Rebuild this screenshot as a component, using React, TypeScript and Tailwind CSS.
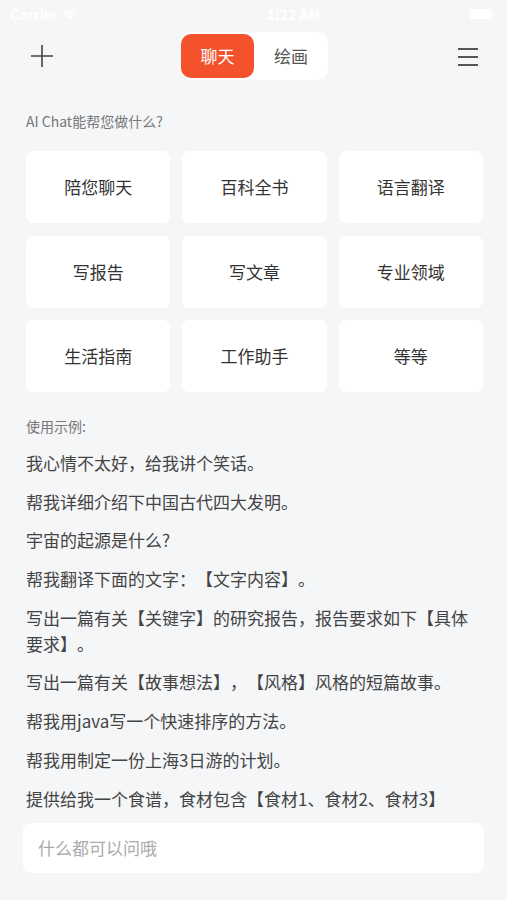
import { useState } from "react";

const FEATURES = ["陪您聊天", "百科全书", "语言翻译", "写报告", "写文章", "专业领域", "生活指南", "工作助手", "等等"];

const EXAMPLES = [
  "我心情不太好，给我讲个笑话。",
  "帮我详细介绍下中国古代四大发明。",
  "宇宙的起源是什么?",
  "帮我翻译下面的文字：【文字内容】。",
  "写出一篇有关【关键字】的研究报告，报告要求如下【具体要求】。",
  "写出一篇有关【故事想法】，【风格】风格的短篇故事。",
  "帮我用java写一个快速排序的方法。",
  "帮我用制定一份上海3日游的计划。",
  "提供给我一个食谱，食材包含【食材1、食材2、食材3】",
];

function StatusBar() {
  return (
    <div className="flex h-[28px] items-center justify-between px-[10px] text-[14px] font-semibold text-white">
      <div className="flex items-center gap-[4px]">
        <span>Carrier</span>
        <svg width="15" height="11" viewBox="0 0 15 11" fill="white">
          <path d="M7.5 10.5 5 7.6a3.6 3.6 0 0 1 5 0L7.5 10.5Z" />
          <path d="M3.2 5.6a6.2 6.2 0 0 1 8.6 0l-1.1 1.2a4.6 4.6 0 0 0-6.4 0L3.2 5.6Z" />
          <path d="M1.2 3.5a9 9 0 0 1 12.6 0l-1.1 1.2a7.4 7.4 0 0 0-10.4 0L1.2 3.5Z" />
        </svg>
      </div>
      <span className="pl-[40px]">1:22 AM</span>
      <div className="flex items-center gap-[1px] pr-[2px]">
        <div className="h-[10px] w-[22px] rounded-[2px] bg-white" />
        <div className="h-[4px] w-[2px] rounded-r-[1px] bg-white" />
      </div>
    </div>
  );
}

function Header() {
  const [tab, setTab] = useState<"chat" | "draw">("chat");
  return (
    <div className="flex h-[56px] items-start justify-between pt-[4px]">
      <button type="button" className="ml-[30px] mt-[12px] flex h-[24px] w-[24px] items-center justify-center">
        <svg width="24" height="24" viewBox="0 0 24 24" fill="none" stroke="#444" strokeWidth="1.6">
          <path d="M12 1v22M1 12h22" />
        </svg>
      </button>
      <div className="ml-[-2px] flex h-[48px] w-[147px] items-center rounded-[10px] bg-white">
        <button
          type="button"
          onClick={() => setTab("chat")}
          className={`h-[44px] w-[73px] rounded-[10px] text-[17px] ${
            tab === "chat" ? "bg-[#f4522d] text-white" : "text-[#555]"
          }`}
        >
          聊天
        </button>
        <button
          type="button"
          onClick={() => setTab("draw")}
          className={`h-[44px] flex-1 rounded-[10px] text-[17px] ${
            tab === "draw" ? "bg-[#f4522d] text-white" : "text-[#555]"
          }`}
        >
          绘画
        </button>
      </div>
      <button type="button" className="mr-[28px] mt-[14px] flex h-[20px] w-[22px] items-center justify-center">
        <svg width="22" height="20" viewBox="0 0 22 20" fill="none" stroke="#555" strokeWidth="2">
          <path d="M1 3h20M1 11h20M1 19h20" />
        </svg>
      </button>
    </div>
  );
}

export default function App() {
  return (
    <div
      className="min-h-[900px] w-[507px] bg-[#f5f6f8] [text-spacing-trim:space-all]"
      style={{ fontFamily: '"Noto Sans CJK SC", "Noto Sans", sans-serif' }}
    >
      <StatusBar />
      <Header />

      <p className="mt-[27px] px-[26px] text-[14px] leading-[20px] text-[#777]">AI Chat能帮您做什么?</p>

      <div className="mt-[20px] grid grid-cols-3 gap-x-[12px] gap-y-[12.5px] pl-[26px] pr-[24px]">
        {FEATURES.map((f) => (
          <button
            key={f}
            type="button"
            className="flex h-[72px] items-center justify-center rounded-[7px] bg-white text-[17px] text-[#333]"
          >
            {f}
          </button>
        ))}
      </div>

      <p className="mt-[24px] px-[26px] text-[14px] leading-[20px] text-[#777]">使用示例:</p>

      <ul className="mt-[14px] flex flex-col gap-[12.7px] pl-[26px] pr-[30px]">
        {EXAMPLES.map((e) => (
          <li key={e} className="text-[17px] leading-[26px] text-[#444]">
            {e}
          </li>
        ))}
      </ul>

      <div className="mx-[23px] mt-[11px] flex h-[50px] items-center rounded-[8px] bg-white px-[15px]">
        <input
          className="w-full bg-transparent text-[17px] text-[#333] outline-none placeholder:text-[#aaa]"
          placeholder="什么都可以问哦"
        />
      </div>
    </div>
  );
}
